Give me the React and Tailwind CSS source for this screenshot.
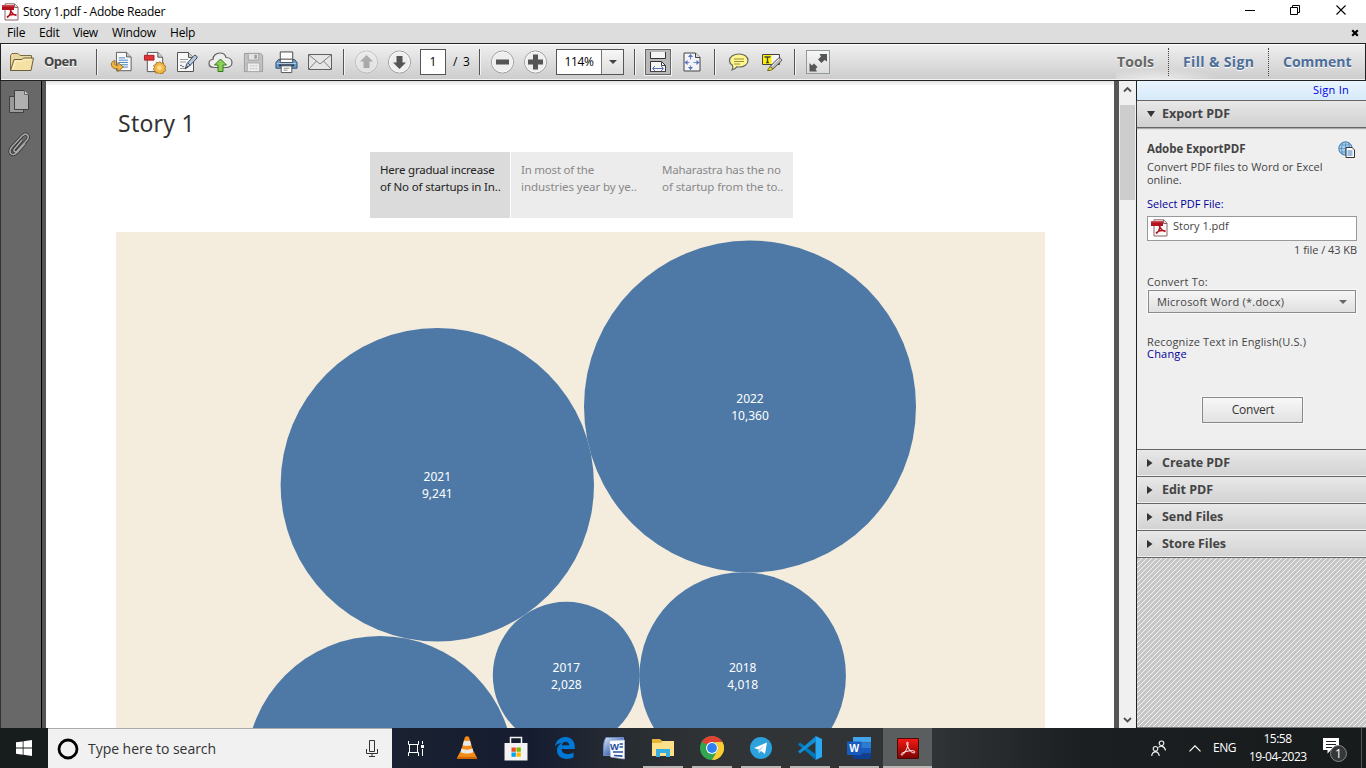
const Svg = ({ w, h, vb, className = '', children }) => (
  <svg width={w} height={h} viewBox={vb || `0 0 ${w} ${h}`} fill="none" className={`block shrink-0 ${className}`}>
    {children}
  </svg>
);

const Sep = ({ className = '' }) => (
  <span className={`h-[26px] w-px shrink-0 bg-[#555] shadow-[1px_0_0_#f4f4f4] ${className}`} />
);

const Slot = ({ className = '', children }) => (
  <span className={`flex h-[30px] w-[33px] shrink-0 items-center justify-center ${className}`}>{children}</span>
);

const AdobeFile = () => (
  <Svg w={17} h={18}>
    <path d="M3 .8h9.5L16 4v13H3z" fill="#fafafa" stroke="#8b6464" />
    <path d="M12.5 1v3.5H16" fill="#ddd" stroke="#8b6464" />
    <path d="M0 2h12v5H0z" fill="#b3111d" />
    <path d="M0 2h12v1.5H0z" fill="#ce4650" />
    <path d="M8 6c1 3 2.500 6 6.500 6.500M9 6.500C8.800 10 7 13.500 5 14.500M5 14c2-2 5-3 9.500-2" stroke="#b3111d" strokeWidth="1.500" />
  </Svg>
);

const TitleBar = () => (
  <div className="flex h-[23px] shrink-0 items-center bg-white pl-[2px]">
    <AdobeFile />
    <span className="ml-[4px] text-[12px] tracking-[-0.31px] text-black">Story 1.pdf - Adobe Reader</span>
    <Svg w={140} h={23} className="ml-auto">
      <path d="M19 10.500h10" stroke="#000" />
      <path d="M64.500 7.500h7v7h-7zM66.500 7V5.500h7v7H72" stroke="#000" />
      <path d="m110.500 5.500 9 9m0-9-9 9" stroke="#000" strokeWidth="1.100" />
    </Svg>
  </div>
);

const MenuBar = () => (
  <div className="flex h-[20px] shrink-0 items-center bg-[#ddd] text-[12px] text-black">
    <span className="ml-[7px] w-[32px] tracking-[-0.2px]">File</span>
    <span className="w-[34px] tracking-[-0.2px]">Edit</span>
    <span className="w-[39px] tracking-[-0.4px]">View</span>
    <span className="w-[58px] tracking-[-0.25px]">Window</span>
    <span className="tracking-[-0.2px]">Help</span>
    <Svg w={8} h={8} className="mr-[7px] ml-auto">
      <path d="m1.200 1.200 5.600 5.600m0-5.600L1.200 6.800" stroke="#000" strokeWidth="2.200" />
    </Svg>
  </div>
);

const RoundButton = ({ faded, children }) => (
  <Svg w={24} h={24} className={faded ? 'opacity-50' : ''}>
    <circle cx="11.500" cy="12" r="11" fill="#eeeeee" stroke="#9a9a9a" />
    <circle cx="11.500" cy="12" r="10" stroke="#fafafa" />
    <g transform="translate(-.5 0)">{children}</g>
  </Svg>
);

const Toolbar = () => (
  <div className="flex h-[38px] shrink-0 items-center border border-[#222] bg-linear-to-b from-[#f0f0f0] to-[#cccccc] text-[12px] text-black shadow-[inset_0_1px_0_#fff,inset_0_-1px_0_#f4f4f4]">
    <span className="w-[42px] shrink-0 pl-[8px]">
      <Svg w={26} h={21}>
        <path d="M1.500 19V3.500l1.500-2h6l2 2h11.500v3" fill="#e9d7a0" stroke="#7c6b42" />
        <path d="M1.500 18.500 5 7.500h8l1.500-1.500H24.500L22 18.500z" fill="#f3e1a6" stroke="#6d5e3b" />
        <path d="M4 17 6.500 9h7l1.500-1.500h7" stroke="#fff3c8" />
      </Svg>
    </span>
    <span className="w-[53px] shrink-0 pl-[1px] text-[13px] font-bold tracking-[-0.5px] text-[#444] [text-shadow:0_1px_0_#fff]">Open</span>
    <Sep className="mr-[8px]" />
    <Slot>
      <Svg w={23} h={22} vb="0 0 24 24">
        <path d="M6.500 1.500h11l5 5v15h-16z" fill="#f8f8f8" stroke="#555" />
        <path d="M17.500 1.500v5h5" fill="#ccc" stroke="#555" />
        <path d="M9 7.500h7M9 10h10M9 12.500h10M9 15h10M9 17.500h10" stroke="#3b7cc4" />
        <path d="M5 10.500c-3.500.500-4.500 3-4 5 .7 3 3.500 4 7 4v3l6-5-6-5v3.500c-2.500 0-4-1-3-5.500z" fill="#f1b544" stroke="#96661a" />
      </Svg>
    </Slot>
    <Slot>
      <Svg w={23} h={23} vb="0 0 24 24">
        <path d="M4.500 1.500h11l5 5v15h-16z" fill="#f8f8f8" stroke="#555" />
        <path d="M15.500 1.500v5h5" fill="#ccc" stroke="#555" />
        <path d="M1.500 4.500h10v5h-10z" fill="#df3338" stroke="#a81e24" />
        <path d="m17.500 11 1.500 2 2.400-.700.300 2.500 2.200 1.200-1 2.300 1 2.200-2.400.900-.500 2-2.200-.300-1.500 1-1.800-1.400-2.400.300-.400-2.400-2-1.300 1.300-2-.9-2.300 2.400-.800.500-2.400 2.300.700z" fill="#f2b94b" stroke="#a87521" />
        <circle cx="17.200" cy="17.500" r="2.500" fill="#ffdc88" />
      </Svg>
    </Slot>
    <Slot>
      <Svg w={23} h={22} vb="1 1 23 22">
        <path d="M2.500 2.500h11l5 5v14h-16z" fill="#f8f8f8" stroke="#555" />
        <path d="M13.500 2.500v5h5" fill="#ccc" stroke="#555" />
        <path d="M5 9.500h8M5 12h6M5 18.500h5" stroke="#999" />
        <path d="M5 16c2-3 2 3 4 0" stroke="#555" />
        <path d="m10 19 2-5.500 7-8c1-1 4 1 3 2.500l-7.500 8z" fill="#b5c8df" stroke="#3d4c60" />
        <path d="m13 13 2.500 2.500M10 19l3-3" stroke="#3d4c60" />
      </Svg>
    </Slot>
    <Slot>
      <Svg w={25} h={24}>
        <path d="M6 17.500C2.500 17.500 1 15.500 1 13.500c0-2.500 2-4 4-4 0-4 3-6.500 7-6.500 3.500 0 5.500 2 6 4.500 3.500 0 6 2 6 5s-2.500 5-5.500 5z" fill="#eee" stroke="#606060" strokeWidth="1.200" />
        <path d="m12.500 9 6 6h-3.500v6.500h-5V15H6.500z" fill="#8bd05a" stroke="#377919" />
      </Svg>
    </Slot>
    <Slot>
      <Svg w={21} h={21} vb="0 0 22 22">
        <path d="M1.500 1.500h17l2 2v17h-19z" fill="#c3c3c3" stroke="#9a9a9a" />
        <path d="M5.500 1.500h11v7h-11z" fill="#e3e3e3" stroke="#a2a2a2" />
        <path d="M12 3h2.500v4H12z" fill="#999" />
        <path d="M4.500 11.500h13v9h-13z" fill="#eee" stroke="#a8a8a8" />
        <path d="M7 14.500h8M7 17.500h8" stroke="#bbb" strokeDasharray="2 1" />
      </Svg>
    </Slot>
    <Slot>
      <Svg w={23} h={24} vb="0 0 24 24">
        <path d="M5.500 1.500h13v10h-13z" fill="#fcfcfc" stroke="#444" />
        <path d="M3.500 9.500h17l2.500 3v6H1v-6z" fill="#6c9cc7" stroke="#2e4e70" />
        <path d="M5.500 9h13v3.500h-13z" fill="#fff" stroke="#444" />
        <path d="M2 13.500h20" stroke="#b3d2ec" />
        <path d="M4 15.500h16" stroke="#243b57" strokeWidth="2" />
        <path d="M6.500 16h11v7h-11z" fill="#fff" stroke="#555" />
        <path d="M9 18.500h6M9 20.500h4" stroke="#888" />
      </Svg>
    </Slot>
    <Slot>
      <Svg w={24} h={18}>
        <path d="M.500 1.500h23v15H.500z" fill="#e6e6e6" stroke="#606060" />
        <path d="m1 2 11 9L23 2M1 16l7.500-8M23 16l-7.500-8" stroke="#808080" />
      </Svg>
    </Slot>
    <Sep className="mr-[6px] ml-[7px]" />
    <Slot>
      <RoundButton faded><path d="m12 5 6.500 6.500H15V18H9v-6.500H5.500z" fill="#777" /></RoundButton>
    </Slot>
    <Slot>
      <RoundButton><path d="M12 19 5.500 12.500H9V6h6v6.500h3.500z" fill="#555" /></RoundButton>
    </Slot>
    <span className="ml-[4px] flex h-[26px] w-[26px] shrink-0 items-center justify-center border border-[#555] bg-white">1</span>
    <span className="w-[33px] shrink-0 pl-[7px] tracking-[1.200px]">/ 3</span>
    <Sep className="mr-[6px]" />
    <Slot>
      <RoundButton><path d="M5.500 9.500h13v5h-13z" fill="#555" /></RoundButton>
    </Slot>
    <Slot>
      <RoundButton><path d="M9.500 4.500h5v5H19.500v5h-5v5h-5v-5h-5v-5h5z" fill="#555" /></RoundButton>
    </Slot>
    <span className="ml-[4px] flex h-[26px] w-[68px] shrink-0 border border-[#555] bg-white">
      <span className="flex w-[44px] items-center justify-center tracking-[-0.4px]">114%</span>
      <span className="flex flex-1 items-center justify-center border-l border-[#777] bg-linear-to-b from-[#f7f7f7] to-[#dedede]">
        <Svg w={8} h={4}><path d="M0 0h8L4 4z" fill="#444" /></Svg>
      </span>
    </span>
    <Sep className="ml-[10px]" />
    <span className="ml-[10px] flex h-[26px] w-[26px] shrink-0 justify-center border border-[#666] bg-[#b9b9b9] pt-[2px] shadow-[0_0_0_1px_#f4f4f4]">
      <Svg w={18} h={21}>
        <path d="M1.500 0v6.500h15V0" fill="#f5f5f5" stroke="#333" />
        <path d="M1.500 19.500v-10h11l4 4v6" fill="#f5f5f5" stroke="#333" />
        <path d="M12.500 9.500v4h4M1 19.500h16" stroke="#444" />
        <path d="M4 16.500h10M6 14l-2.500 2.500L6 19m6-5 2.500 2.500L12 19" stroke="#5573b5" />
      </Svg>
    </span>
    <Slot className="ml-[4px]">
      <Svg w={18} h={20}>
        <path d="M1 1h11.500L17 5.500V19H1z" fill="#f3f3f8" stroke="#444" />
        <path d="M12.500 1v4.500H17" fill="#ddd" stroke="#444" />
        <path d="M7.500 2.500v5m0 6v4M1.500 10.500h5m4 0h6" stroke="#6f8cc6" strokeWidth="1.200" />
        <path d="m5 5 2.500-3L10 5zm0 10 2.500 3 2.500-3zM4.500 8l-3 2.500 3 2.500zm9 0 3 2.500-3 2.500z" fill="#5573b5" />
      </Svg>
    </Slot>
    <Sep className="mr-[7px] ml-[6px]" />
    <Slot>
      <Svg w={22} h={20}>
        <path d="M11 2c5 0 9 2.600 9 6.500S16 15 11.500 15c-1 0-1.500 0-2.500-.300-1 1.500-3 3-5 3.300 1-1.500 1-3 .5-4.800C2.500 12 1.500 10.500 1.500 8.500 1.500 4.600 6 2 11 2z" fill="#fff68d" stroke="#666" strokeWidth="1.200" />
        <path d="M6 7h10M6 9.500h10M6 12h6" stroke="#938b42" />
      </Svg>
    </Slot>
    <Slot>
      <Svg w={22} h={20}>
        <path d="M1.500 2.500h17v10h-17z" fill="#f5f5f5" stroke="#444" />
        <path d="M2 3h8.500v9H2z" fill="#fff200" />
        <path d="M4 5.500V5h5v.500M6.500 5v5.500m-1.500 0h3" stroke="#444" strokeWidth="1.300" />
        <path d="m9 14.500 8-8c1.500-1.500 4.500.500 3.500 2.500l-8.500 8z" fill="#b9b9b9" stroke="#555" />
        <path d="m11 14 7-7" stroke="#eee" />
        <path d="m9 14.500 3 2.500-2.500 1.500H6.500z" fill="#e6dc20" stroke="#77711e" />
      </Svg>
    </Slot>
    <Sep className="mr-[11px] ml-[6px]" />
    <span className="flex h-[24px] w-[24px] shrink-0 items-center justify-center border border-[#929a94] bg-linear-to-b from-[#f7f7f7] to-[#dcdcdc]">
      <Svg w={20} h={20}>
        <path d="M11.500 2H19v7.500L16.500 8l-3 3L10 7.500l3-3zM1.500 11 4 13.500l2-2L9.500 15l-2 2L9 19.500H1.500z" fill="#555" />
      </Svg>
    </span>
    <div className="ml-auto flex h-full items-center bg-[radial-gradient(ellipse_at_40px_100%,#eeeeee_0,transparent_65px)] text-[14px] font-bold text-[#4e6e9a] [text-shadow:0_1px_0_#fff]">
      <span className="w-[52px] pb-[2px] pl-[1px] tracking-[0.1px] text-[#666]">Tools</span>
      <span className="h-[28px] border-l border-dotted border-[#444]" />
      <span className="w-[99px] pb-[2px] pl-[14px] tracking-[0.35px]">Fill &amp; Sign</span>
      <span className="h-[28px] border-l border-dotted border-[#444]" />
      <span className="w-[96px] pb-[2px] pl-[14px] tracking-[0px]">Comment</span>
    </div>
  </div>
);

const Rail = () => (
  <div className="flex w-[46px] shrink-0 border-r-4 border-[#555] bg-[#686868]">
    <div className="flex flex-1 flex-col border-r border-l border-r-black border-l-[#333] pt-[9px] pl-[7px]">
      <Svg w={22} h={24}>
        <path d="M1.500 6.500h14v16h-14z" fill="#9a9a9a" stroke="#404040" />
        <path d="M6.500.500h10l4 4v15h-14z" fill="#b0b0b0" stroke="#404040" />
        <path d="M16.500.500v4h4" fill="#d2d2d2" stroke="#666" />
      </Svg>
      <Svg w={23} h={25} className="mt-[18px]">
        <path d="m14 8-7.500 9c-1.500 2 .5 4 2.500 2L19 8c3.500-4.500-1-8-5-4L3.500 15.500C-.5 21 4.500 25 9 20.500l8-9" stroke="#303030" strokeWidth="3" />
        <path d="m14 8-7.500 9c-1.500 2 .5 4 2.500 2L19 8c3.500-4.500-1-8-5-4L3.500 15.500C-.5 21 4.500 25 9 20.500l8-9" stroke="#a8a8a8" strokeWidth="1.600" />
      </Svg>
    </div>
  </div>
);

const bubbles = [
  { cx: 321.3, cy: 252.7, r: 156.7, year: '2021', value: '9,241' },
  { cx: 634, cy: 174.5, r: 166, year: '2022', value: '10,360' },
  { cx: 450.3, cy: 443.3, r: 73.5, year: '2017', value: '2,028' },
  { cx: 626.7, cy: 443.5, r: 103.2, year: '2018', value: '4,018' },
  { cx: 264, cy: 538, r: 134 },
];

const BubbleChart = () => (
  <Svg w={929} h={496} className="ml-[70px]">
    <path d="M0 0h929v496H0z" fill="#f4ecdc" />
    {bubbles.map((b) => (
      <circle key={b.cx} cx={b.cx} cy={b.cy} r={b.r} fill="#4e79a7" />
    ))}
    {bubbles.filter((b) => b.year).map((b) => (
      <g key={b.cx} fill="#fff" textAnchor="middle" fontSize="12" fontFamily="Noto Sans, sans-serif">
        <text x={b.cx} y={Math.ceil(b.cy - 4)}>{b.year}</text>
        <text x={b.cx} y={Math.ceil(b.cy + 13)}>{b.value}</text>
      </g>
    ))}
  </Svg>
);

const Page = () => (
  <div className="flex min-w-0 flex-1 flex-col overflow-hidden bg-white bg-linear-to-b from-[#e2e2e2] to-white to-[5px] font-['Noto_Sans',sans-serif]">
    <h1 className="mt-[26px] ml-[72px] h-[33px] text-[23px] leading-[33px] tracking-[0.25px] text-[#333]">Story 1</h1>
    <div className="mt-[12px] ml-[324px] flex h-[66px] shrink-0 text-[11.5px] leading-[17px] whitespace-nowrap">
      <div className="w-[141px] border-r border-white bg-[#dbdbdb] pt-[9px] pl-[10px] text-[#222]">
        <p className="tracking-[-0.2px]">Here gradual increase</p>
        <p className="tracking-[-0.15px]">of No of startups in In..</p>
      </div>
      <div className="w-[141px] bg-[#ececec] pt-[9px] pl-[10px] text-[#888]">
        <p className="tracking-[-0.22px]">In most of the</p>
        <p className="tracking-[-0.07px]">industries year by ye..</p>
      </div>
      <div className="w-[141px] bg-[#ececec] pt-[9px] pl-[10px] text-[#888]">
        <p className="tracking-[-0.15px]">Maharastra has the no</p>
        <p className="tracking-[-0.08px]">of startup from the to..</p>
      </div>
    </div>
    <div className="mt-[14px]"><BubbleChart /></div>
  </div>
);

const Scrollbar = () => (
  <div className="flex w-[22px] shrink-0 flex-col items-center border-l-[5px] border-[#555] bg-[#f0f0f0]">
    <Svg w={17} h={24}><path d="m5 10.500 3.500-3.500 3.500 3.500" stroke="#505050" strokeWidth="1.800" /></Svg>
    <div className="h-[95px] w-[15px] bg-[#cdcdcd]" />
    <Svg w={17} h={17} className="mt-auto"><path d="m5 7 3.500 3.500L12 7" stroke="#505050" strokeWidth="1.800" /></Svg>
  </div>
);

const Section = ({ title }) => (
  <div className="flex h-[27px] shrink-0 items-center border-t border-[#666] bg-linear-to-b from-[#e8e8e8] to-[#d2d2d2] pl-[10px] text-[12.5px] font-bold text-[#444] shadow-[inset_1px_-1px_0_#f0f0f0]">
    <Svg w={6} h={8}><path d="M0 0v8l5.500-4z" fill="#333" /></Svg>
    <span className="ml-[9px] pb-px tracking-[-0.05px]">{title}</span>
  </div>
);

const ToolsPane = () => (
  <div className="flex w-[230px] shrink-0 flex-col border-l border-[#222] bg-[#efefef] text-[11px] leading-[13px] text-[#444]">
    <div className="h-[19px] shrink-0 bg-linear-to-b from-[#eaf5fe] to-[#d6eafa] pt-[2px] pr-[17px] text-right tracking-[0.25px] text-[#0000e8]">Sign In</div>
    <div className="flex h-[28px] shrink-0 items-center border-y border-[#666] bg-linear-to-b from-[#e8e8e8] to-[#d0d0d0] pl-[10px] text-[12.5px] font-bold shadow-[0_1px_1px_#aaa]">
      <Svg w={8} h={6}><path d="M0 0h8L4 6z" fill="#333" /></Svg>
      <span className="ml-[7px] pb-[2px]">Export PDF</span>
    </div>
    <div className="flex h-[321px] shrink-0 flex-col pr-[9px] pl-[10px]">
      <div className="mt-[13px] flex h-[18px] shrink-0 justify-between pr-[2px]">
        <span className="pt-[1px] text-[11.5px] font-bold tracking-[-0.05px]">Adobe ExportPDF</span>
        <Svg w={17} h={17}>
          <circle cx="7.500" cy="7.500" r="6.700" fill="#a9cfed" stroke="#3f78ae" />
          <path d="M1 7.500h13M7.500 1v13M2.500 4h10m-10 7h10M5 1.500c-2 4-2 8 0 12M10 1.500c2 4 2 8 0 12" stroke="#4886bb" strokeWidth=".7" />
          <path d="M8 6.500h6l2.500 2.500v7.500H8z" fill="#fff" stroke="#333" />
          <path d="M9.500 10h5m-5 2h5m-5 2h5" stroke="#317ac0" />
        </Svg>
      </div>
      <p className="mt-[1px] tracking-[0.04px] whitespace-nowrap">Convert PDF files to Word or Excel</p>
      <p>online.</p>
      <p className="mt-[11px] tracking-[0px] text-[#000099]">Select PDF File:</p>
      <div className="mt-[6px] flex h-[25px] shrink-0 items-start border border-[#999] bg-white pt-[2px] pl-[3px]">
        <AdobeFile />
        <span className="ml-[5px]">Story 1.pdf</span>
      </div>
      <p className="mt-[2px] text-right tracking-[-0.05px]">1 file / 43 KB</p>
      <p className="mt-[19px] tracking-[0.18px]">Convert To:</p>
      <div className="mt-[2px] ml-[1px] mr-[1px] flex h-[23px] shrink-0 items-center justify-between border border-[#8a8a8a] bg-linear-to-b from-[#f6f6f6] to-[#e0e0e0] pr-[8px] pl-[8px] shadow-[0_0_0_1px_#fafafa]">
        <span className="tracking-[0.22px]">Microsoft Word (*.docx)</span>
        <Svg w={8} h={4}><path d="M0 0h8L4 4z" fill="#666" /></Svg>
      </div>
      <p className="mt-[23px] leading-[12px] tracking-[0.15px]">Recognize Text in English(U.S.)</p>
      <p className="leading-[12px] tracking-[0.2px] text-[#000099]">Change</p>
      <div className="mt-[37px] ml-[55px] flex h-[26px] w-[101px] shrink-0 items-center justify-center border border-[#888] bg-linear-to-b from-[#f8f8f8] to-[#e2e2e2] pb-px pl-px text-[12px] tracking-[-0.2px] text-[#333] shadow-[0_0_0_1px_#f8f8f8]">Convert</div>
    </div>
    <Section title="Create PDF" />
    <Section title="Edit PDF" />
    <Section title="Send Files" />
    <Section title="Store Files" />
    <div className="flex-1 border-y border-t-[#666] border-b-[#777]">
      <svg className="block h-full w-full">
        <defs>
          <pattern id="hatch" width="5" height="5" patternUnits="userSpaceOnUse">
            <path d="M0 0h5v5H0z" fill="#c6c6c6" />
            <path d="M-1 1 1-1M-1 6 6-1M4 6l2-2" stroke="#f4f4f4" />
          </pattern>
        </defs>
        <rect width="100%" height="100%" fill="url(#hatch)" />
      </svg>
    </div>
  </div>
);

const Vlc = () => (
  <Svg w={22} h={24}>
    <path d="M4 16h14l3 6H1z" fill="#f08a12" />
    <path d="M1 21h20v2H1z" fill="#cf6605" />
    <path d="m9 1-5 17c3 2.500 11 2.500 14 0L13 1c-1-1-3-1-4 0z" fill="#f58b18" />
    <path d="m8 4.500-1.300 4.700c3 1 5.600 1 8.600 0L14 4.500c-2 .8-4 .8-6 0zM5.500 12.500l-1 3.500c4 2 9 2 13 0l-1-3.500c-3 1.500-8 1.500-11 0z" fill="#e9e9e9" />
  </Svg>
);

const Store = () => (
  <Svg w={24} h={25}>
    <path d="M6.500 8V1.500h11V8" stroke="#f3f3f3" strokeWidth="1.500" />
    <path d="M.500 7h23v17.500H.500z" fill="#f3f3f3" />
    <path d="M7.500 11.500h4.300v4.300H7.500z" fill="#e84f27" />
    <path d="M12.500 11.500h4.300v4.300h-4.300z" fill="#7eb900" />
    <path d="M7.500 16.500h4.300v4.300H7.500z" fill="#00a3ee" />
    <path d="M12.500 16.500h4.300v4.300h-4.300z" fill="#feb800" />
  </Svg>
);

const Edge = () => (
  <Svg w={22} h={24}>
    <path d="M1 10.500C2 4.500 6 1 11.500 1 17 1 20.800 5 20.800 10.500V13H7.500c.3 5.500 7.500 6.500 12 3.500v4.800C12 25 3 22 3 14.500c0-4 2.500-6.500 5-7.700C4.500 7 2.200 8.800 1 10.500zM7.700 9.300h7.500c0-4.500-6.500-4.800-7.500 0z" fill="#0078d7" />
  </Svg>
);

const WordOld = () => (
  <Svg w={24} h={24}>
    <defs>
      <linearGradient id="wordBack" x1="0" y1="0" x2="1" y2="1">
        <stop stopColor="#dfe8f8" />
        <stop offset=".6" stopColor="#4a72ba" />
      </linearGradient>
    </defs>
    <path d="M4 1.500h17.500v18H1.500C1.500 12 1 6 4 1.500z" fill="url(#wordBack)" stroke="#6d8cc4" />
    <path d="m7.500 4.500 15-.5v19l-14-2z" fill="#f8fbff" stroke="#a6b8d8" strokeWidth=".7" />
    <path d="M17.500 8h3.500M17.500 11h3.500M11 16h10M12 19.500l8.500.7" stroke="#2c529c" strokeWidth="1.700" />
    <text x="12.500" y="13.500" fill="#204a9a" fontSize="9.500" fontWeight="bold" textAnchor="middle" fontFamily="Liberation Sans, sans-serif">W</text>
  </Svg>
);

const Explorer = () => (
  <Svg w={22} h={20}>
    <path d="M0 1h8l2 2h12v4H0z" fill="#e8b33a" />
    <path d="M0 5h9l1.500-2H22v15H0z" fill="#ffe08a" />
    <path d="M4 19v-8h14v8h-4v-4H8v4z" fill="#35aee4" />
  </Svg>
);

const Chrome = () => (
  <Svg w={24} h={24}>
    <circle cx="12" cy="12" r="12" fill="#31a552" />
    <path d="M22.400 6A12 12 0 0 1 12 24l5.200-9a6 6 0 0 0 0-6L15 6z" fill="#fccb30" />
    <path d="M12 0a12 12 0 0 1 10.400 6H12L6.800 9 1.600 6A12 12 0 0 1 12 0z" fill="#e34133" />
    <path d="M1.600 6 6.800 15 8 9z" fill="#31a552" />
    <circle cx="12" cy="12" r="6" fill="#fff" />
    <circle cx="12" cy="12" r="4.900" fill="#2f7ff0" />
  </Svg>
);

const Telegram = () => (
  <Svg w={22} h={22}>
    <circle cx="11" cy="11" r="11" fill="#2ca1dc" />
    <path d="M4 11 17 5.500 15 17l-4-3-2 2-.5-3.500z" fill="#fff" />
    <path d="m8.500 12.500 6-4.500-4 5.500L9 16z" fill="#b9d9ec" />
  </Svg>
);

const VsCode = () => (
  <Svg w={24} h={24}>
    <path d="M17.500 0 24 3v18l-6.500 3z" fill="#29a9f2" />
    <path d="M0 8.500 2 6.500 18 18.500V24z" fill="#0078bd" />
    <path d="m0 15.500 2 2L18 5.500V0z" fill="#128ed4" />
  </Svg>
);

const WordNew = () => (
  <Svg w={24} h={22}>
    <path d="M6 0h18v5.500H6z" fill="#41a5ee" />
    <path d="M6 5.500h18V11H6z" fill="#2b7cd3" />
    <path d="M6 11h18v5.500H6z" fill="#185abd" />
    <path d="M6 16.500h18V22H6z" fill="#103f91" />
    <path d="M0 4.500h14.500v13.500H0z" fill="#185abd" />
    <text x="7.200" y="15" fill="#fff" fontSize="10.500" fontWeight="bold" textAnchor="middle" fontFamily="Liberation Sans, sans-serif">W</text>
  </Svg>
);

const Acrobat = () => (
  <Svg w={22} h={21}>
    <defs>
      <linearGradient id="acro" x1="0" y1="0" x2="0" y2="1">
        <stop stopColor="#f51a12" />
        <stop offset="1" stopColor="#7d0303" />
      </linearGradient>
    </defs>
    <path d="M.500.500h21v20H.500z" fill="url(#acro)" stroke="#4c0908" />
    <path d="M10.500 4c-1 0-1 2 .2 4.500 1.300 3.500 4 6.500 6.500 6.500 1.500-1 .5-2.500-3-2.300-3.500 0-7 1.300-9.200 2.500C3.500 16.500 4.500 18 6 16.500c2-2 4-5.500 4.700-8.500.4-2 .4-4-.2-4z" stroke="#fff" />
  </Svg>
);

const apps = [
  { name: 'vlc', Icon: Vlc },
  { name: 'store', Icon: Store },
  { name: 'edge', Icon: Edge },
  { name: 'word-old', Icon: WordOld },
  { name: 'explorer', Icon: Explorer, open: true },
  { name: 'chrome', Icon: Chrome, open: true },
  { name: 'telegram', Icon: Telegram, open: true },
  { name: 'vscode', Icon: VsCode, open: true },
  { name: 'word', Icon: WordNew, open: true },
  { name: 'acrobat', Icon: Acrobat, open: true, active: true },
];

const Taskbar = () => (
  <div className="flex h-[40px] shrink-0 bg-[linear-gradient(90deg,#171d1d_0,#171d1d_48px,#1a2130_392px,#151c30_530px,#272c32_620px,#303436_720px,#303436_930px,#1c1f21_1080px,#171b1c_1366px)] text-white">
    <div className="flex w-[48px] items-center justify-center">
      <Svg w={16} h={16}>
        <path d="M0 2.300 6.700 1.400v6.200H0zM7.500 1.300 16 0v7.600H7.500zM0 8.400h6.700v6.300L0 13.800zM7.500 8.400H16V16l-8.500-1.200z" fill="#fff" />
      </Svg>
    </div>
    <div className="flex w-[344px] items-center border-t border-[#aaa] bg-[#f1f1f1] text-[14px] text-[#333]">
      <Svg w={22} h={22} className="ml-[9px]">
        <circle cx="11" cy="11" r="9" stroke="#000" strokeWidth="2.800" />
      </Svg>
      <span className="ml-[9px] tracking-[-0.04px]">Type here to search</span>
      <Svg w={12} h={17} className="mr-[14px] ml-auto">
        <path d="M3.500.500h5v11h-5zM.500 9v4.500h11V9M6 13.500v3M3 16.500h6" stroke="#333" />
      </Svg>
    </div>
    <div className="flex w-[50px] items-center justify-center pr-[2px]">
      <Svg w={16} h={15}>
        <path d="M.500 0v3.500h10V0M.500 15v-3.500h10V15M1.500 3.500v8M9.500 3.500v8M14.500 0v3M14.500 8v7" stroke="#fff" />
        <path d="M13 4h3v3h-3z" fill="#fff" />
      </Svg>
    </div>
    {apps.map(({ name, Icon, open, active }) => (
      <div key={name} className={`flex w-[49px] flex-col items-center ${active ? 'bg-[#5b5e5f]' : ''}`}>
        <div className="flex flex-1 items-center"><Icon /></div>
        <div className={`-mt-[2px] h-[2px] ${active ? 'w-full' : 'w-[40px]'} ${open ? 'bg-[#b9b6b4]' : ''}`} />
      </div>
    ))}
    <div className="ml-auto flex items-center text-[12px]">
      <Svg w={16} h={17} className="mr-[22px]">
        <path d="M10.500 1a2.300 2.300 0 1 1 0 4.600 2.300 2.300 0 0 1 0-4.600zM7.500 7.500c1.500-2 6-2 7 3M4.500 6.500a2.300 2.300 0 1 1 0 4.600 2.300 2.300 0 0 1 0-4.600zM.700 16c.5-5.500 7-5.500 7.500 0" stroke="#eee" strokeWidth="1.200" />
      </Svg>
      <Svg w={12} h={7} className="mr-[12px]"><path d="m.500 6.300 5.500-5.500 5.500 5.500" stroke="#fff" strokeWidth="1.200" /></Svg>
      <span className="w-[36px] tracking-[-0.5px]">ENG</span>
      <div className="mr-[17px] w-[57px] text-center leading-[18px] tracking-[-0.5px] whitespace-nowrap">
        <p>15:58</p>
        <p>19-04-2023</p>
      </div>
      <Svg w={26} h={26} className="mt-[4px] mr-[12px]">
        <path d="M0 1h16v12H8l-3.500 3.500V13H0z" fill="#fff" />
        <path d="M3 4.500h10M3 7.500h10M3 10.500h6" stroke="#222" />
        <circle cx="15.500" cy="16.500" r="8" fill="#343838" stroke="#888" />
        <text x="15.500" y="20.500" fill="#fff" fontSize="12" textAnchor="middle" fontFamily="Open Sans, sans-serif">1</text>
      </Svg>
      <span className="mr-[4px] h-[40px] w-px bg-[#555]" />
    </div>
  </div>
);

export default function App() {
  return (
    <div className="flex h-[768px] w-[1366px] flex-col overflow-hidden bg-white font-['Open_Sans',sans-serif]">
      <TitleBar />
      <MenuBar />
      <Toolbar />
      <div className="flex h-[647px] shrink-0">
        <Rail />
        <Page />
        <Scrollbar />
        <ToolsPane />
      </div>
      <Taskbar />
    </div>
  );
}
